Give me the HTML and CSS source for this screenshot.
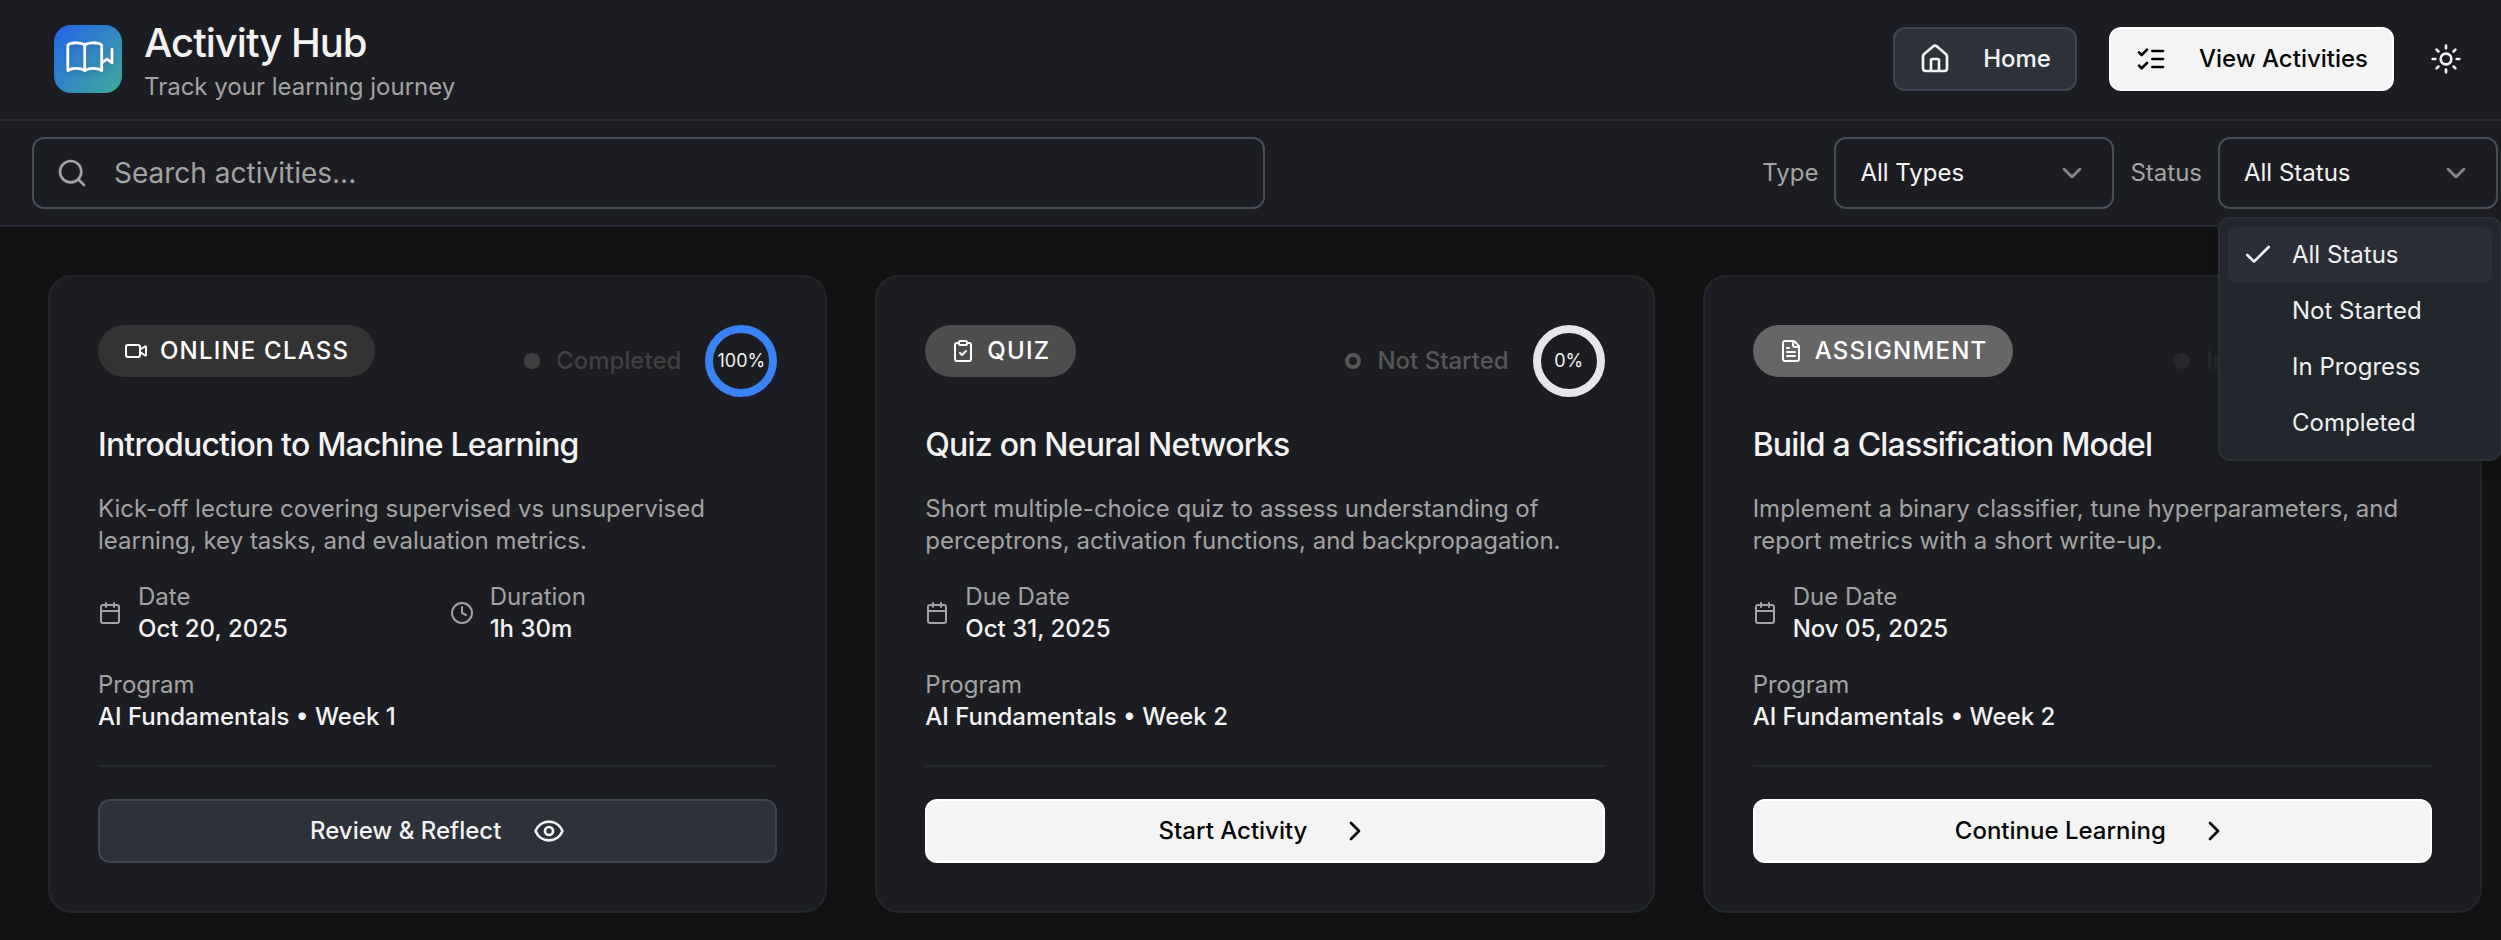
FILE: index.html
```html
<!DOCTYPE html>
<html lang="en">
<head>
<meta charset="utf-8">
<title>Activity Hub</title>
<link rel="stylesheet" href="styles.css">
</head>
<body>
<svg class="sprite" aria-hidden="true">
  <symbol id="home" viewBox="0 0 24 24"><path d="M15 21v-8a1 1 0 0 0-1-1h-4a1 1 0 0 0-1 1v8"/><path d="M3 10a2 2 0 0 1 .709-1.528l7-5.999a2 2 0 0 1 2.582 0l7 5.999A2 2 0 0 1 21 10v9a2 2 0 0 1-2 2H5a2 2 0 0 1-2-2z"/></symbol>
  <symbol id="checks" viewBox="0 0 24 24"><path d="m3 17 2 2 4-4M3 7l2 2 4-4M13 6h8M13 12h8M13 18h8"/></symbol>
  <symbol id="sun" viewBox="0 0 24 24"><circle cx="12" cy="12" r="4"/><path d="M12 2v2M12 20v2M4.93 4.93l1.41 1.41M17.66 17.66l1.41 1.41M2 12h2M20 12h2M6.34 17.66l-1.41 1.41M19.07 4.93l-1.41 1.41"/></symbol>
  <symbol id="search" viewBox="0 0 24 24"><circle cx="11" cy="11" r="8"/><path d="m21 21-4.3-4.3"/></symbol>
  <symbol id="down" viewBox="0 0 24 24"><path d="m6 9 6 6 6-6"/></symbol>
  <symbol id="right" viewBox="0 0 24 24"><path d="m9 18 6-6-6-6"/></symbol>
  <symbol id="check" viewBox="0 0 24 24"><path d="M20 6 9 17l-5-5"/></symbol>
  <symbol id="video" viewBox="0 0 24 24"><path d="m16 13 5.223 3.482a.5.5 0 0 0 .777-.416V7.87a.5.5 0 0 0-.752-.432L16 10.5"/><rect x="2" y="6" width="14" height="12" rx="2"/></symbol>
  <symbol id="clipboard" viewBox="0 0 24 24"><rect width="8" height="4" x="8" y="2" rx="1"/><path d="M16 4h2a2 2 0 0 1 2 2v14a2 2 0 0 1-2 2H6a2 2 0 0 1-2-2V6a2 2 0 0 1 2-2h2"/><path d="m9 14 2 2 4-4"/></symbol>
  <symbol id="file" viewBox="0 0 24 24"><path d="M15 2H6a2 2 0 0 0-2 2v16a2 2 0 0 0 2 2h12a2 2 0 0 0 2-2V7Z"/><path d="M14 2v4a2 2 0 0 0 2 2h4M10 9H8M16 13H8M16 17H8"/></symbol>
  <symbol id="calendar" viewBox="0 0 24 24"><path d="M8 2v4M16 2v4M3 10h18"/><rect width="18" height="18" x="3" y="4" rx="2"/></symbol>
  <symbol id="clock" viewBox="0 0 24 24"><circle cx="12" cy="12" r="10"/><path d="M12 6v6l4 2"/></symbol>
  <symbol id="eye" viewBox="0 0 24 24"><path d="M2.062 12.348a1 1 0 0 1 0-.696 10.75 10.75 0 0 1 19.876 0 1 1 0 0 1 0 .696 10.75 10.75 0 0 1-19.876 0"/><circle cx="12" cy="12" r="3"/></symbol>
</svg>

<header class="header">
  <div class="brand">
    <div class="logo">
      <svg viewBox="0 0 68 68"><path d="M30.7 20.2C27.5 17 17.5 17 13.8 20V45.5C18 42.5 27 42.5 30.7 45.8C34.5 42.5 43.5 42.5 47.7 45.5V20C44 17 34 17 30.7 20.2V45.8M47.9 37.8L52.9 34.2L58 38V24.5"/></svg>
    </div>
    <div class="brand-text">
      <h1 class="brand-title">Activity Hub</h1>
      <p class="brand-sub">Track your learning journey</p>
    </div>
  </div>
  <nav class="nav">
    <a class="btn btn-dark"><svg class="icon"><use href="#home"/></svg><span>Home</span></a>
    <a class="btn btn-light"><svg class="icon"><use href="#checks"/></svg><span>View Activities</span></a>
    <a class="theme"><svg class="icon"><use href="#sun"/></svg></a>
  </nav>
</header>

<section class="filters">
  <div class="search"><svg class="icon"><use href="#search"/></svg><span>Search activities...</span></div>
  <div class="filter-group">
    <span class="filter-label">Type</span>
    <div class="select"><span>All Types</span><svg class="icon chevron"><use href="#down"/></svg></div>
    <span class="filter-label">Status</span>
    <div class="select"><span>All Status</span><svg class="icon chevron"><use href="#down"/></svg>
      <ul class="menu">
        <li class="option selected"><svg class="icon"><use href="#check"/></svg><span>All Status</span></li>
        <li class="option"><span>Not Started</span></li>
        <li class="option"><span>In Progress</span></li>
        <li class="option"><span>Completed</span></li>
      </ul>
    </div>
  </div>
</section>

<main class="cards">
  <article class="card">
    <div class="card-top">
      <span class="badge badge-class"><svg class="icon small"><use href="#video"/></svg><span>ONLINE CLASS</span></span>
      <div class="progress"><span class="status completed"><i class="dot"></i>Completed</span><span class="ring full">100%</span></div>
    </div>
    <h2 class="card-title">Introduction to Machine Learning</h2>
    <p class="desc">Kick-off lecture covering supervised vs unsupervised<br>learning, key tasks, and evaluation metrics.</p>
    <div class="details">
      <div class="meta"><svg class="icon small"><use href="#calendar"/></svg><div><p class="label">Date</p><p class="value">Oct 20, 2025</p></div></div>
      <div class="meta"><svg class="icon small"><use href="#clock"/></svg><div><p class="label">Duration</p><p class="value">1h 30m</p></div></div>
      <div class="program"><p class="label">Program</p><p class="value">AI Fundamentals • Week 1</p></div>
    </div>
    <div class="card-foot"><a class="btn btn-dark"><span>Review &amp; Reflect</span><svg class="icon"><use href="#eye"/></svg></a></div>
  </article>

  <article class="card">
    <div class="card-top">
      <span class="badge badge-quiz"><svg class="icon small"><use href="#clipboard"/></svg><span>QUIZ</span></span>
      <div class="progress"><span class="status idle"><i class="dot"></i>Not Started</span><span class="ring">0%</span></div>
    </div>
    <h2 class="card-title">Quiz on Neural Networks</h2>
    <p class="desc">Short multiple-choice quiz to assess understanding of<br>perceptrons, activation functions, and backpropagation.</p>
    <div class="details">
      <div class="meta"><svg class="icon small"><use href="#calendar"/></svg><div><p class="label">Due Date</p><p class="value">Oct 31, 2025</p></div></div>
      <div class="program"><p class="label">Program</p><p class="value">AI Fundamentals • Week 2</p></div>
    </div>
    <div class="card-foot"><a class="btn btn-light"><span>Start Activity</span><svg class="icon"><use href="#right"/></svg></a></div>
  </article>

  <article class="card">
    <div class="card-top">
      <span class="badge badge-assignment"><svg class="icon small"><use href="#file"/></svg><span>ASSIGNMENT</span></span>
      <div class="progress"><span class="status active"><i class="dot"></i>In Progress</span><span class="ring half"></span></div>
    </div>
    <h2 class="card-title">Build a Classification Model</h2>
    <p class="desc">Implement a binary classifier, tune hyperparameters, and<br>report metrics with a short write-up.</p>
    <div class="details">
      <div class="meta"><svg class="icon small"><use href="#calendar"/></svg><div><p class="label">Due Date</p><p class="value">Nov 05, 2025</p></div></div>
      <div class="program"><p class="label">Program</p><p class="value">AI Fundamentals • Week 2</p></div>
    </div>
    <div class="card-foot"><a class="btn btn-light"><span>Continue Learning</span><svg class="icon"><use href="#right"/></svg></a></div>
  </article>
</main>
</body>
</html>
```
FILE: styles.css
```css
* { box-sizing: border-box; }
body, h1, h2, p, ul { margin: 0; padding: 0; }
body {
  height: 940px;
  overflow: hidden;
  background: #121212;
  color: #f3f3f3;
  font: 400 24px/32px Inter, sans-serif;
}
.sprite { display: none; }
.icon {
  display: block;
  flex: none;
  width: 32px;
  height: 32px;
  fill: none;
  stroke: currentColor;
  stroke-width: 2;
  stroke-linecap: round;
  stroke-linejoin: round;
}
.icon.small { width: 24px; height: 24px; }

/* Header */
.header {
  display: flex;
  justify-content: space-between;
  height: 121px;
  padding: 0 39px 0 54px;
  background: #1c1d22;
  border-bottom: 2px solid #252a32;
}
.brand { display: flex; gap: 22px; padding-top: 19px; }
.logo {
  width: 68px;
  height: 68px;
  margin-top: 6px;
  border-radius: 17px;
  background: linear-gradient(135deg, #2563eb, #40ab99);
}
.logo svg {
  display: block;
  width: 68px;
  height: 68px;
  fill: none;
  stroke: #fff;
  stroke-width: 2.8;
  stroke-linecap: round;
  stroke-linejoin: round;
  filter: drop-shadow(0 2px 2px rgba(0, 0, 0, .15));
}
.brand-text { display: flex; flex-direction: column; gap: 4px; }
.brand-title { font-size: 40px; line-height: 48px; font-weight: 500; letter-spacing: -1px; }
.brand-sub { color: #a3a3a3; }
.nav { display: flex; gap: 32px; align-items: flex-start; padding-top: 27px; }
.theme { padding: 16px 0; margin: 0 0 0 4px; }
.btn {
  display: flex;
  align-items: center;
  justify-content: center;
  gap: 32px;
  height: 64px;
  padding: 0 24px;
  border: 2px solid;
  border-radius: 12px;
  font-weight: 500;
  white-space: nowrap;
}
.btn-dark { background: #2d3139; border-color: #3d4554; color: #f3f3f3; }
.btn-light { background: #f4f4f4; border-color: #fff; color: #050505; }

/* Filter bar */
.filters {
  display: flex;
  justify-content: space-between;
  height: 106px;
  padding: 16px 3px 0 32px;
  background: #1c1d22;
  border-bottom: 2px solid #252a32;
}
.search {
  display: flex;
  align-items: center;
  gap: 26px;
  width: 1233px;
  height: 72px;
  padding: 0 22px;
  border: 2px solid #454d5b;
  border-radius: 12px;
  color: #a3a3a3;
  font-size: 28px;
}
.filter-group { display: flex; gap: 16px; height: 72px; align-items: center; }
.filter-label { color: #a3a3a3; }
.select {
  position: relative;
  display: flex;
  align-items: center;
  justify-content: space-between;
  width: 280px;
  height: 72px;
  padding: 0 24px;
  border: 2px solid #454d5b;
  border-radius: 12px;
}
.chevron { opacity: .5; }
.menu {
  position: absolute;
  z-index: 5;
  top: 78px;
  left: -2px;
  width: 284px;
  padding: 8px;
  border: 2px solid #292e37;
  border-radius: 12px;
  background: #22272e;
  box-shadow: 0 8px 12px -2px rgba(0, 0, 0, .2);
  list-style: none;
}
.option {
  display: flex;
  align-items: center;
  gap: 18px;
  height: 56px;
  padding-left: 64px;
  border-radius: 8px;
  color: #f0f0f0;
}
.option.selected { padding-left: 14px; background: #2b2e38; }

/* Cards */
.cards {
  display: grid;
  grid-template-columns: repeat(3, 1fr);
  gap: 48px;
  padding: 48px 19px 0 48px;
}
.card {
  height: 638px;
  padding: 48px;
  border: 2px solid #22262d;
  border-radius: 24px;
  background: #1c1d22;
}
.card-top { display: flex; justify-content: space-between; align-items: flex-start; }
.badge {
  display: flex;
  align-items: center;
  gap: 12px;
  height: 52px;
  padding: 0 26px;
  border-radius: 26px;
  color: #fff;
  font-weight: 500;
  letter-spacing: 1.2px;
}
.badge-class { background: #333; }
.badge-quiz { background: #4d4d4d; }
.badge-assignment { background: #666; }
.progress { display: flex; align-items: center; gap: 24px; }
.status { display: flex; align-items: center; gap: 16px; font-weight: 500; }
.dot { width: 16px; height: 16px; border-radius: 50%; background: currentColor; }
.completed { color: #404040; }
.idle { color: #575757; }
.idle .dot { background: none; border: 4px solid; }
.active { color: #29292c; }
.ring {
  display: flex;
  align-items: center;
  justify-content: center;
  width: 72px;
  height: 72px;
  border: 8px solid #e5e7eb;
  border-radius: 50%;
  font-size: 18px;
  line-height: 28px;
}
.ring.full, .ring.half { border-color: #3b82f6; }
.card-title {
  margin: 32px 0;
  font-size: 32px;
  line-height: 32px;
  font-weight: 500;
  letter-spacing: -.8px;
}
.desc { color: #a3a3a3; }
.details {
  display: grid;
  grid-template-columns: 1fr 1fr;
  gap: 24px;
  margin: 24px 0 32px;
}
.meta { display: flex; align-items: center; gap: 16px; }
.meta .icon { color: #a3a3a3; }
.label { color: #a3a3a3; }
.value { font-weight: 500; }
.program { grid-column: 1 / -1; }
.card-foot { padding-top: 32px; border-top: 2px solid #252a32; }
```
